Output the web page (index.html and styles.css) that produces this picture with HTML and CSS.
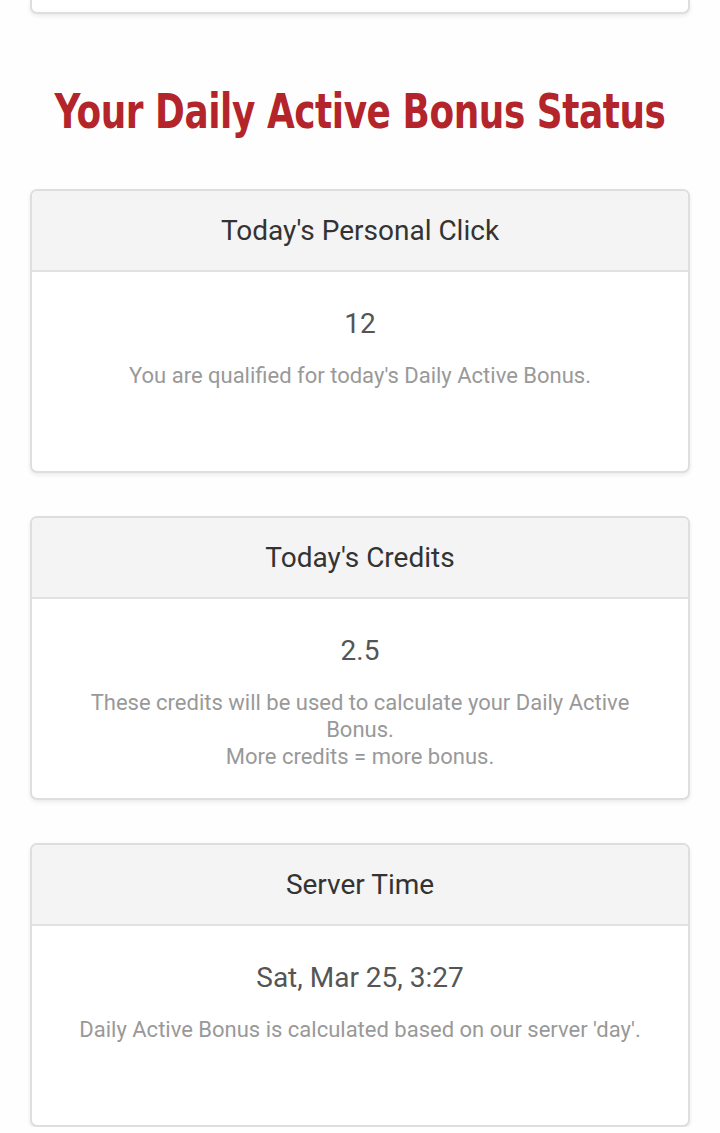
FILE: index.html
```html
<!DOCTYPE html>
<html>
<head>
<meta charset="utf-8">
<link rel="stylesheet" href="styles.css">
</head>
<body>
<div class="page">
  <div class="card card-stub"></div>
  <h1 class="title"><span class="title-text">Your Daily Active Bonus Status</span></h1>
  <div class="card">
    <div class="card-head">Today's Personal Click</div>
    <div class="card-body">
      <div class="value">12</div>
      <p class="desc">You are qualified for today's Daily Active Bonus.</p>
    </div>
  </div>
  <div class="card">
    <div class="card-head">Today's Credits</div>
    <div class="card-body">
      <div class="value">2.5</div>
      <p class="desc">These credits will be used to calculate your Daily Active Bonus.<br>More credits = more bonus.</p>
    </div>
  </div>
  <div class="card">
    <div class="card-head">Server Time</div>
    <div class="card-body">
      <div class="value">Sat, Mar 25, 3:27</div>
      <p class="desc">Daily Active Bonus is calculated based on our server 'day'.</p>
    </div>
  </div>
</div>
</body>
</html>
```

FILE: styles.css
```css
html, body {
  margin: 0;
  padding: 0;
  background: #fefefe;
}
body {
  font-family: Roboto, "Liberation Sans", sans-serif;
  color: #333;
}
.page {
  padding: 0 30px;
  display: flex;
  flex-direction: column;
  gap: 43px;
}
.card {
  background: #fff;
  border: 2px solid #dedede;
  border-radius: 7px;
  box-shadow: 0 2px 4px rgba(0, 0, 0, 0.08);
  overflow: hidden;
}
.card-stub {
  height: 12px;
  border-top: none;
  border-radius: 0 0 7px 7px;
  margin-bottom: 24px;
}
.title {
  margin: 0 0 5px;
  display: flex;
  justify-content: center;
  font-family: "DejaVu Sans Condensed", "DejaVu Sans", sans-serif;
  font-weight: bold;
  font-size: 48px;
  line-height: 60px;
  color: #b3252a;
  white-space: nowrap;
}
.title-text {
  flex-shrink: 0;
  margin: 0 -50px;
  transform: scaleX(0.83);
  letter-spacing: -0.5px;
}
.card-head {
  background: #f4f4f4;
  border-bottom: 2px solid #e2e2e2;
  height: 79px;
  display: flex;
  align-items: center;
  justify-content: center;
  font-size: 28px;
  color: #333;
}
.card-body {
  min-height: 199px;
  box-sizing: border-box;
  padding: 31px 40px 20px;
  text-align: center;
}
.value {
  font-size: 28px;
  line-height: 42px;
  color: #555;
}
.desc {
  margin: 17px 0 0;
  font-size: 22px;
  line-height: 27px;
  color: #999;
}
```
